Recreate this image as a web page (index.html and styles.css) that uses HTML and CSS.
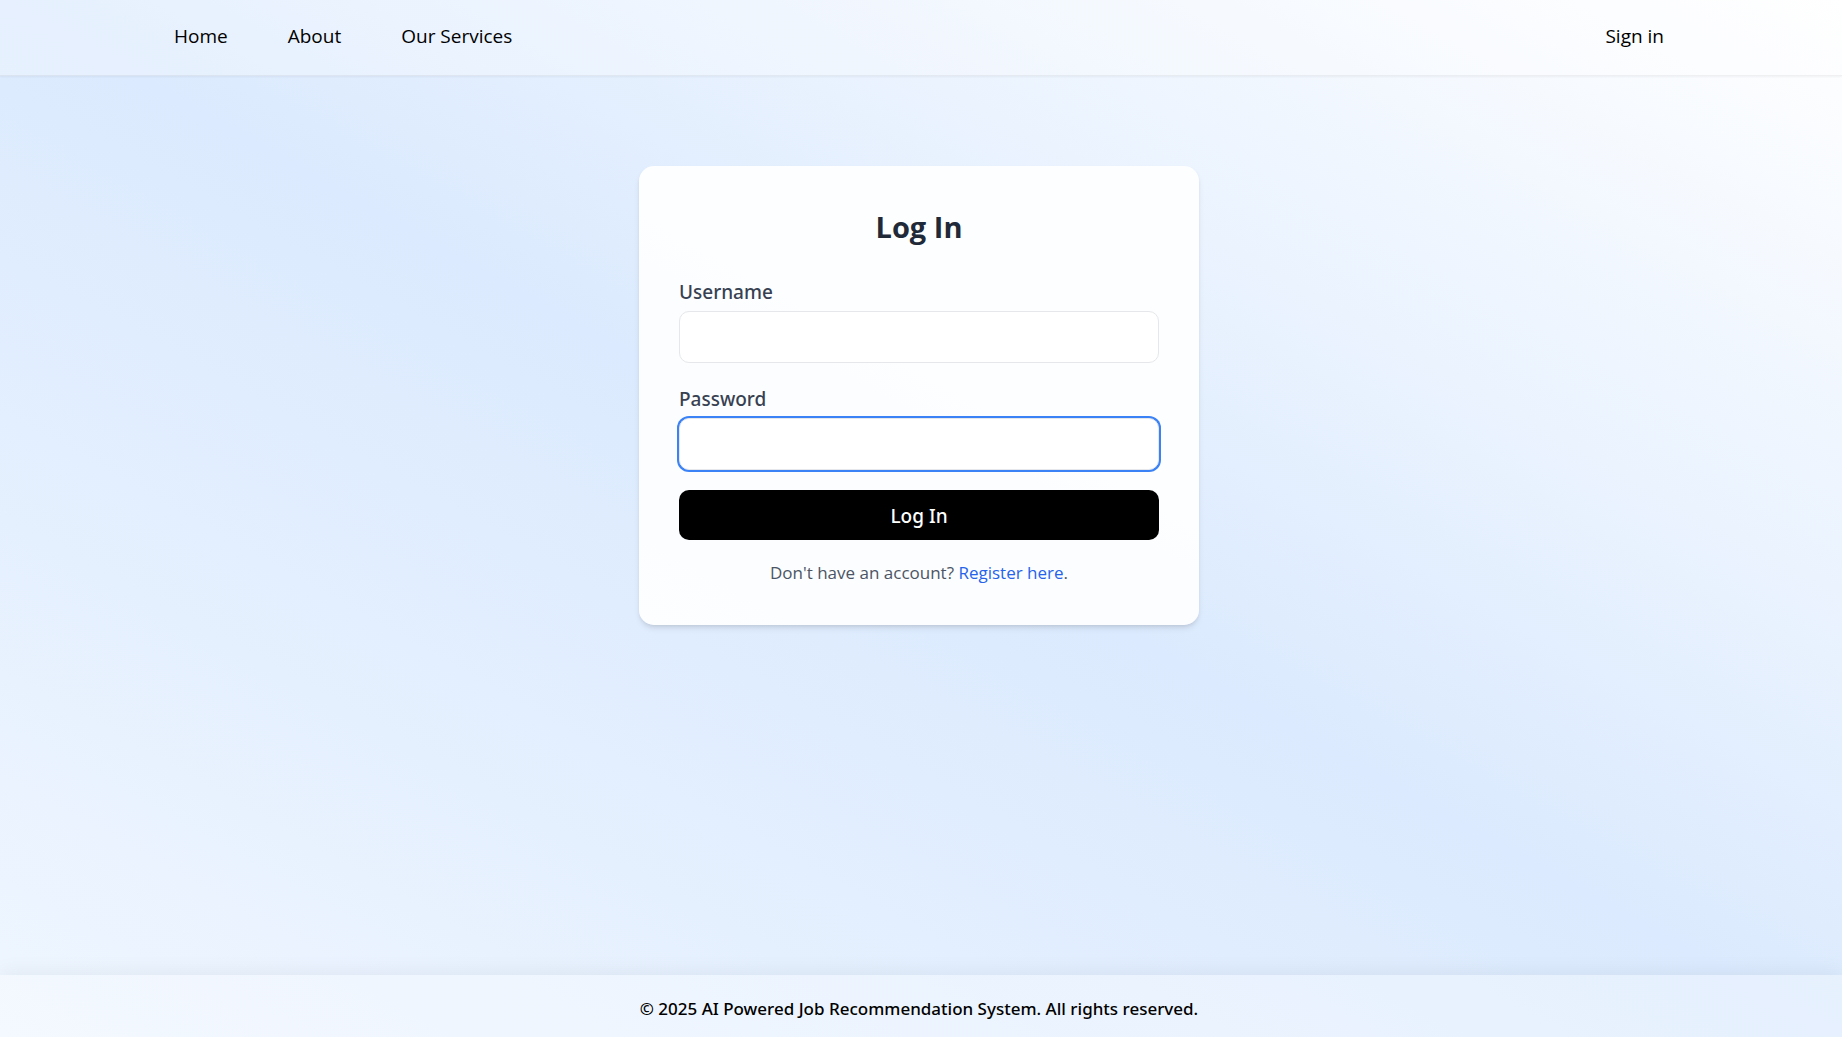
FILE: index.html
```
<!DOCTYPE html>
<html lang="en">
<head>
<meta charset="utf-8">
<meta name="viewport" content="width=device-width, initial-scale=1">
<title>Log In</title>
<link rel="stylesheet" href="styles.css">
</head>
<body class="page">
  <header class="site-header">
    <nav class="nav" aria-label="Main">
      <div class="nav-links">
        <a href="#home">Home</a>
        <a href="#about">About</a>
        <a href="#services">Our Services</a>
      </div>
      <a href="#signin">Sign in</a>
    </nav>
  </header>
  <main class="content">
    <section class="card">
      <h1 class="card-title">Log In</h1>
      <form class="form">
        <div class="field">
          <label for="username">Username</label>
          <input id="username" name="username" type="text">
        </div>
        <div class="field">
          <label for="password">Password</label>
          <input id="password" name="password" type="password" autofocus>
        </div>
        <button class="submit" type="submit">Log In</button>
      </form>
      <p class="hint">Don't have an account? <a href="#register">Register here</a>.</p>
    </section>
  </main>
  <footer class="site-footer">
    <p>© 2025 AI Powered Job Recommendation System. All rights reserved.</p>
  </footer>
</body>
</html>
```
FILE: styles.css
```
*,
*::before,
*::after {
  box-sizing: border-box;
}

.page {
  --font-medium: "Segoe UI", "Noto Sans", sans-serif;
  margin: 0;
  min-height: 100vh;
  display: flex;
  flex-direction: column;
  font-family: "Segoe UI", "Open Sans", sans-serif;
  font-size: 19px;
  line-height: 30px;
  color: #000;
  background: linear-gradient(to top right, #eff6ff, #dbeafe, #fff);
}

a {
  color: inherit;
  text-decoration: none;
}

.site-header {
  padding: 21px 24px 24px 20px;
  background: rgba(255, 255, 255, 0.3);
  border-bottom: 1px solid rgba(0, 0, 0, 0.05);
  box-shadow: 0 1px 2px rgba(0, 0, 0, 0.05);
}

.nav {
  max-width: 1490px;
  margin: 0 auto;
  display: flex;
  justify-content: space-between;
}

.nav-links {
  display: flex;
  gap: 60px;
}

.content {
  flex: 1;
  padding: 90px 24px 40px 20px;
}

.card {
  max-width: 560px;
  margin: 0 auto;
  padding: 41px 40px 40px;
  border-radius: 15px;
  background: rgba(255, 255, 255, 0.9);
  box-shadow: 0 4px 6px -1px rgba(0, 0, 0, 0.1), 0 2px 4px -2px rgba(0, 0, 0, 0.1);
}

.card-title {
  margin: 0 0 30px;
  font-size: 29px;
  font-weight: 700;
  line-height: 40px;
  text-align: center;
  color: #1f2937;
}

.form {
  display: flex;
  flex-direction: column;
  gap: 20px;
}

.field {
  display: flex;
  flex-direction: column;
  gap: 4px;
}

.field + .field {
  padding-top: 1px;
}

.field label {
  font-family: var(--font-medium);
  font-weight: 500;
  color: #374151;
}

.field input {
  width: 100%;
  padding: 10px;
  border: 1px solid #e5e7eb;
  border-radius: 10px;
  background: #fff;
  font: inherit;
  caret-color: transparent;
}

.field input:focus {
  outline: none;
  box-shadow: 0 0 0 2px #3b82f6;
}

.submit {
  padding: 11px 10px 9px;
  border: 0;
  border-radius: 10px;
  background: #000;
  color: #fff;
  font: inherit;
  font-family: var(--font-medium);
  font-weight: 500;
}

.hint {
  margin: 20px 0 0;
  font-size: 17px;
  line-height: 25px;
  text-align: center;
  color: #4b5563;
}

.hint a {
  color: #2563eb;
}

.site-footer {
  padding: 21px 24px 16px 20px;
  background: rgba(255, 255, 255, 0.3);
  box-shadow: 0 -4px 20px rgba(0, 0, 0, 0.05);
  font-family: var(--font-medium);
  font-size: 17px;
  font-weight: 500;
  line-height: 25px;
  text-align: center;
}

.site-footer p {
  margin: 0;
}
```
